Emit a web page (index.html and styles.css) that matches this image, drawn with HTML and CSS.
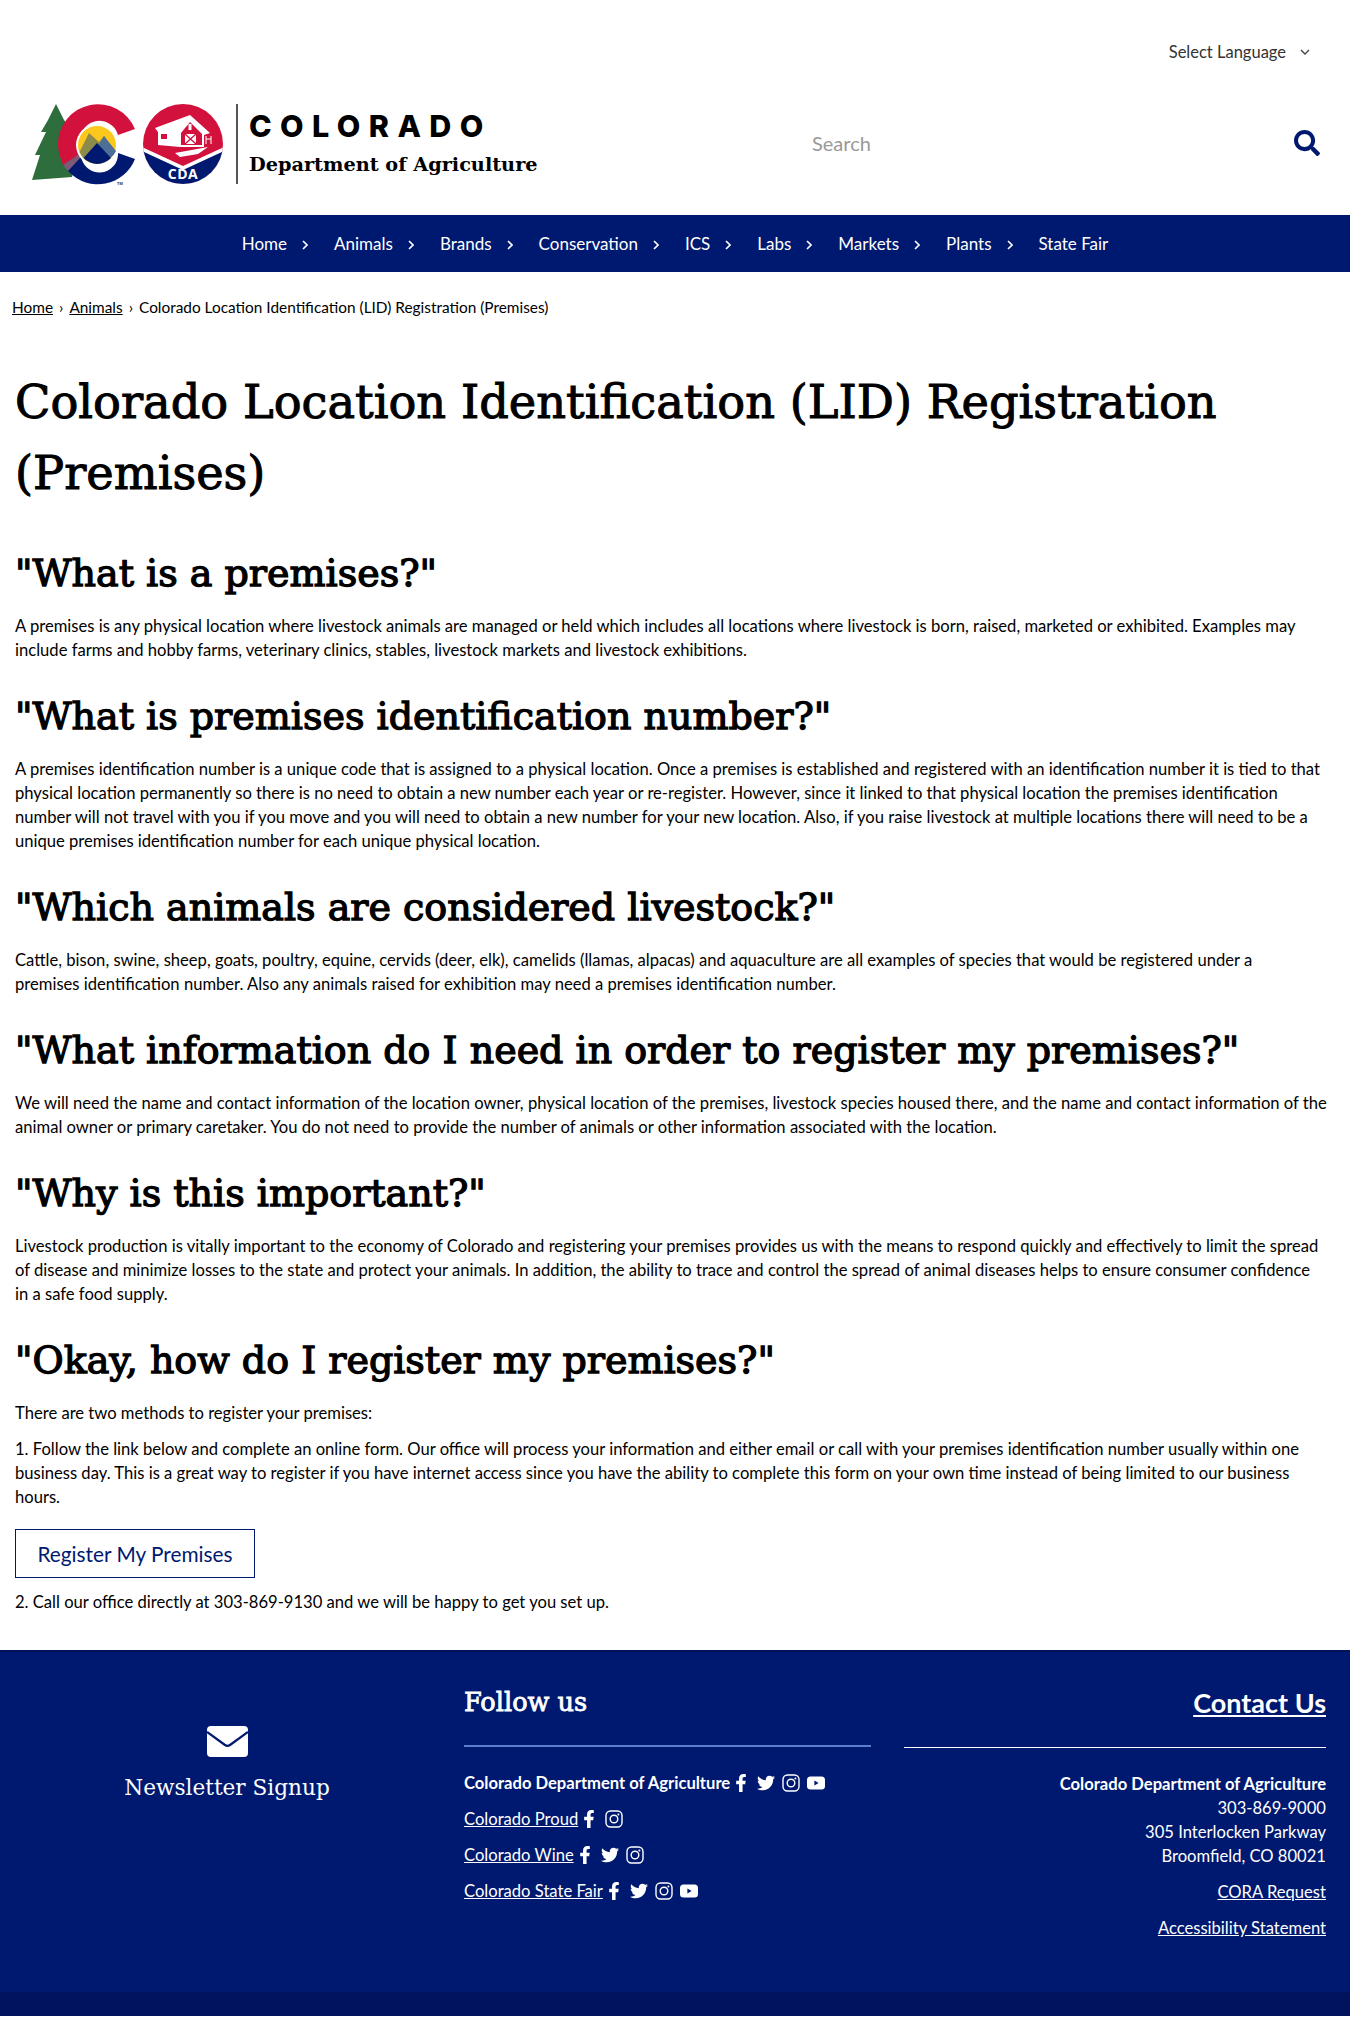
FILE: index.html
```html
<!DOCTYPE html>
<html lang="en">
<head>
    <meta charset="UTF-8">
    <title>Colorado Location Identification (LID) Registration (Premises)</title>
    <link rel="stylesheet" href="styles.css">
</head>
<body>
    <svg class="sprites" width="0" height="0" aria-hidden="true">
        <symbol id="i-fb" viewBox="0 0 320 512"><path d="M279.14 288l14.22-92.66h-88.91v-60.13c0-25.35 12.42-50.06 52.24-50.06h40.42V6.26S260.43 0 225.36 0c-73.22 0-121.08 44.38-121.08 124.72v70.62H22.89V288h81.39v224h100.17V288z"/></symbol>
        <symbol id="i-tw" viewBox="0 0 512 512"><path d="M459.37 151.716c.325 4.548.325 9.097.325 13.645 0 138.72-105.583 298.558-298.558 298.558-59.452 0-114.68-17.219-161.137-47.106 8.447.974 16.568 1.299 25.34 1.299 49.055 0 94.213-16.568 130.274-44.832-46.132-.975-84.792-31.188-98.112-72.772 6.498.974 12.995 1.624 19.818 1.624 9.421 0 18.843-1.3 27.614-3.573-48.081-9.747-84.143-51.98-84.143-102.985v-1.299c13.969 7.797 30.214 12.67 47.431 13.319-28.264-18.843-46.781-51.005-46.781-87.391 0-19.492 5.197-37.36 14.294-52.954 51.655 63.675 129.3 105.258 216.365 109.807-1.624-7.797-2.599-15.918-2.599-24.04 0-57.828 46.782-104.934 104.934-104.934 30.213 0 57.502 12.67 76.67 33.137 23.715-4.548 46.456-13.32 66.599-25.34-7.798 24.366-24.366 44.833-46.132 57.827 21.117-2.273 41.584-8.122 60.426-16.243-14.292 20.791-32.161 39.308-52.628 54.253z"/></symbol>
        <symbol id="i-ig" viewBox="0 0 18 18"><rect x="1" y="1" width="16" height="16" rx="4.5" fill="none" stroke="#fff" stroke-width="1.4"/><circle cx="9" cy="9" r="3.8" fill="none" stroke="#fff" stroke-width="1.4"/><circle cx="13.4" cy="4.6" r="1" fill="#fff"/></symbol>
        <symbol id="i-yt" viewBox="0 0 18 18"><rect x="0" y="2.5" width="18" height="13" rx="3.5" fill="#fff"/><path d="M7.4 6.6L11.6 9l-4.2 2.4z" fill="#001970"/></symbol>
        <symbol id="i-chev" viewBox="0 0 6 10"><path d="M1 1l4 4-4 4" fill="none" stroke="#fff" stroke-width="1.6"/></symbol>
    </svg>

    <header class="site-header">
        <div class="lang-row">
            <span class="lang">Select Language</span>
            <svg class="lang-chev" width="10" height="6" viewBox="0 0 10 6"><path d="M1 1l4 4 4-4" fill="none" stroke="#444" stroke-width="1.4"/></svg>
        </div>
        <div class="brand-row">
            <div class="brand">
                <svg class="logo" width="218" height="82" viewBox="11 13 218 82">
                    <!-- tree -->
                    <path d="M36 14L28 30 21 42 26 42 15 65 20 65 12 90 52 87 60 50 44 30z" fill="#2e6d3c"/>
                    <!-- C -->
                    <path d="M115 39A40 40 0 0 0 38 54c0 7 2 13 5 21l17-11 1-9a17 17 0 0 1 37-10z" fill="#d2123c"/>
                    <path d="M115 69A40 40 0 0 1 49 82 40 40 0 0 1 47 80l14-15a17 17 0 0 0 37-2z" fill="#001970"/>
                    <path d="M43 75l18-12 1 3-14 15a40 40 0 0 1-5-6z" fill="#7c5a78"/>
                    <circle cx="77" cy="55" r="21" fill="#fff"/>
                    <circle cx="77" cy="55" r="19" fill="#fdc81e"/>
                    <path d="M59.500 62a19 19 0 0 0 35 0L84 46l-5 6-10-9z" fill="#8c8b4c"/>
                    <path d="M70 70l14-24 12 15a19 19 0 0 1-2.500 4L88 70z" fill="#4c6f97"/>
                    <path d="M63.500 68L77 53l14 15a19 19 0 0 1-27.500 0z" fill="#001970"/>
                    <text x="97" y="95" class="tm">TM</text>
                    <!-- CDA badge -->
                    <clipPath id="badge"><circle cx="163" cy="54" r="40"/></clipPath>
                    <g clip-path="url(#badge)">
                        <rect x="120" y="10" width="90" height="90" fill="#d2123c"/>
                        <path d="M120 56l43 20 43-20v40h-86z" fill="#fff"/>
                        <path d="M120 60l43 20 43-20v40h-86z" fill="#001970"/>
                    </g>
                    <path d="M135 38l35-13 20 18-6 2v12h-24l-22-2v-13z" fill="#fff"/>
                    <path d="M161 43l9-11 12 12v11h-21z" fill="#d2123c"/>
                    <rect x="165" y="44" width="11" height="10" fill="#fff"/>
                    <path d="M165 44l11 10m0-10l-11 10" stroke="#d2123c" stroke-width="1.300"/>
                    <rect x="141" y="44" width="6" height="5" fill="#d2123c"/>
                    <rect x="168.500" y="34" width="3" height="6" fill="#fff"/>
                    <path d="M186 46v8M191 46v8M186 49h5" stroke="#fff" stroke-width="1" fill="none"/>
                    <path d="M155 63l33-6-10 7-18 3z" fill="#fff"/>
                    <text x="163" y="89" class="cda" text-anchor="middle">CDA</text>
                    <rect x="216" y="14" width="2" height="80" fill="#555"/>
                </svg>
                <div class="brand-text">
                    <div class="brand-state">COLORADO</div>
                    <div class="brand-dept">Department of Agriculture</div>
                </div>
            </div>
            <div class="search">
                <span class="search-text">Search</span>
                <svg class="search-icon" width="26" height="26" viewBox="0 0 512 512"><path d="M505 442.7L405.3 343c-4.5-4.5-10.6-7-17-7H372c27.6-35.3 44-79.7 44-128C416 93.1 322.9 0 208 0S0 93.1 0 208s93.1 208 208 208c48.3 0 92.7-16.4 128-44v16.3c0 6.4 2.5 12.500 7 17l99.7 99.7c9.4 9.4 24.6 9.4 33.9 0l28.3-28.3c9.4-9.4 9.4-24.6.1-34zM208 336c-70.7 0-128-57.2-128-128 0-70.7 57.2-128 128-128 70.7 0 128 57.2 128 128 0 70.7-57.2 128-128 128z"/></svg>
            </div>
        </div>
    </header>

    <nav class="main-nav">
        <a href="#">Home<svg><use href="#i-chev"/></svg></a>
        <a href="#">Animals<svg><use href="#i-chev"/></svg></a>
        <a href="#">Brands<svg><use href="#i-chev"/></svg></a>
        <a href="#">Conservation<svg><use href="#i-chev"/></svg></a>
        <a href="#">ICS<svg><use href="#i-chev"/></svg></a>
        <a href="#">Labs<svg><use href="#i-chev"/></svg></a>
        <a href="#">Markets<svg><use href="#i-chev"/></svg></a>
        <a href="#">Plants<svg><use href="#i-chev"/></svg></a>
        <a href="#">State Fair</a>
    </nav>

    <div class="breadcrumb">
        <a href="#">Home</a><span class="sep">›</span><a href="#">Animals</a><span class="sep">›</span><span>Colorado Location Identification (LID) Registration (Premises)</span>
    </div>

    <main class="content">
        <h1>Colorado Location Identification (LID) Registration (Premises)</h1>

        <h2>"What is a premises?"</h2>
        <p>A premises is any physical location where livestock animals are managed or held which includes all locations where livestock is born, raised, marketed or exhibited. Examples may include farms and hobby farms, veterinary clinics, stables, livestock markets and livestock exhibitions.</p>

        <h2>"What is premises identification number?"</h2>
        <p>A premises identification number is a unique code that is assigned to a physical location. Once a premises is established and registered with an identification number it is tied to that physical location permanently so there is no need to obtain a new number each year or re-register. However, since it linked to that physical location the premises identification number will not travel with you if you move and you will need to obtain a new number for your new location. Also, if you raise livestock at multiple locations there will need to be a unique premises identification number for each unique physical location.</p>

        <h2>"Which animals are considered livestock?"</h2>
        <p>Cattle, bison, swine, sheep, goats, poultry, equine, cervids (deer, elk), camelids (llamas, alpacas) and aquaculture are all examples of species that would be registered under a<br>premises identification number. Also any animals raised for exhibition may need a premises identification number.</p>

        <h2>"What information do I need in order to register my premises?"</h2>
        <p>We will need the name and contact information of the location owner, physical location of the premises, livestock species housed there, and the name and contact information of the animal owner or primary caretaker. You do not need to provide the number of animals or other information associated with the location.</p>

        <h2>"Why is this important?"</h2>
        <p>Livestock production is vitally important to the economy of Colorado and registering your premises provides us with the means to respond quickly and effectively to limit the spread of disease and minimize losses to the state and protect your animals. In addition, the ability to trace and control the spread of animal diseases helps to ensure consumer confidence<br>in a safe food supply.</p>

        <h2>"Okay, how do I register my premises?"</h2>
        <p>There are two methods to register your premises:</p>
        <p>1. Follow the link below and complete an online form. Our office will process your information and either email or call with your premises identification number usually within one business day. This is a great way to register if you have internet access since you have the ability to complete this form on your own time instead of being limited to our business hours.</p>
        <a class="btn" href="#">Register My Premises</a>
        <p>2. Call our office directly at 303-869-9130 and we will be happy to get you set up.</p>
    </main>

    <footer class="site-footer">
        <div class="footer-cols">
            <div class="newsletter">
                <svg class="envelope" width="41" height="31" viewBox="0 0 41 31"><rect width="41" height="31" rx="4" fill="#fff"/><path d="M0 6l18 13q2.500 1.800 5 0L41 6" fill="none" stroke="#001970" stroke-width="2.200"/></svg>
                <div class="newsletter-label">Newsletter Signup</div>
            </div>
            <div class="follow">
                <h3>Follow us</h3>
                <div class="social-row">
                    <span>Colorado Department of Agriculture</span>
                    <svg class="ic"><use href="#i-fb"/></svg><svg class="ic"><use href="#i-tw"/></svg><svg class="ic"><use href="#i-ig"/></svg><svg class="ic"><use href="#i-yt"/></svg>
                </div>
                <div class="social-row">
                    <a href="#">Colorado Proud</a>
                    <svg class="ic"><use href="#i-fb"/></svg><svg class="ic"><use href="#i-ig"/></svg>
                </div>
                <div class="social-row">
                    <a href="#">Colorado Wine</a>
                    <svg class="ic"><use href="#i-fb"/></svg><svg class="ic"><use href="#i-tw"/></svg><svg class="ic"><use href="#i-ig"/></svg>
                </div>
                <div class="social-row">
                    <a href="#">Colorado State Fair</a>
                    <svg class="ic"><use href="#i-fb"/></svg><svg class="ic"><use href="#i-tw"/></svg><svg class="ic"><use href="#i-ig"/></svg><svg class="ic"><use href="#i-yt"/></svg>
                </div>
            </div>
            <div class="contact">
                <a class="contact-title" href="#">Contact Us</a>
                <div class="contact-info">
                    <strong>Colorado Department of Agriculture</strong><br>
                    303-869-9000<br>
                    305 Interlocken Parkway<br>
                    Broomfield, CO 80021
                </div>
                <a class="contact-link" href="#">CORA Request</a>
                <a class="contact-link" href="#">Accessibility Statement</a>
            </div>
        </div>
        <div class="footer-band"></div>
    </footer>
</body>
</html>
```

FILE: styles.css
```css
body { margin: 0; font-family: Lato, "Open Sans", sans-serif; font-size: 16.6px; line-height: 24px; color: #000; background: #fff; }
a { color: inherit; }
.sprites { position: absolute; }

/* header */
.site-header { height: 215px; }
.lang-row { display: flex; justify-content: flex-end; align-items: center; padding: 40px 40px 0 0; height: 24px; font-size: 16.5px; color: #333; }
.lang-chev { margin-left: 14px; }
.brand-row { display: flex; align-items: center; justify-content: space-between; margin-top: 39px; height: 82px; padding: 0 30px 0 31px; }
.brand { display: flex; align-items: center; }
.logo { display: block; }
.tm { font-size: 4px; font-family: "Liberation Sans", sans-serif; font-weight: bold; fill: #333; }
.cda { font-size: 14px; font-weight: bold; font-family: "Open Sans", sans-serif; fill: #fff; letter-spacing: 0.5px; }
.brand-text { display: flex; flex-direction: column; }
.brand-state { font-family: Inter, sans-serif; font-weight: 800; font-size: 30.500px; line-height: 36px; letter-spacing: 8.4px; margin-top: -2px; }
.brand-dept { font-family: "DejaVu Serif", serif; font-weight: 700; font-size: 19.3px; line-height: 28px; margin-top: 7px; }
.search { display: flex; align-items: center; justify-content: space-between; width: 508px; margin-top: -2px; }
.search-text { font-size: 20px; color: #999; }
.search-icon { fill: #001970; display: block; }

/* nav */
.main-nav { display: flex; justify-content: center; background: #001970; height: 57px; align-items: center; color: #fff; }
.main-nav a { display: flex; align-items: center; text-decoration: none; font-size: 17px; }
.main-nav svg { width: 6px; height: 10px; margin: 2px 26px 0 15px; }

.breadcrumb { font-size: 15.4px; padding: 23px 12px 0; height: 72px; line-height: 24px; }
.breadcrumb .sep { margin: 0 6px; }

/* content */
.content { padding: 0 15px; }
h1 { font-family: "DejaVu Serif", serif; font-weight: 400; font-size: 46.3px; line-height: 71px; margin: 0 0 40px; -webkit-text-stroke: 1px #000; }
h2 { font-family: "DejaVu Serif", serif; font-weight: 400; font-size: 38px; line-height: 48px; margin: 30px 0 17px; -webkit-text-stroke: 1.3px #000; }
p { margin: 0 0 12px; }
.btn { display: block; width: 240px; box-sizing: border-box; height: 49px; line-height: 47px; border: 1px solid #001970; color: #001970; text-align: center; text-decoration: none; font-size: 20.8px; margin: 20px 0 12px; }

/* footer */
.site-footer { background: #001970; color: #fff; margin-top: 36px; }
.footer-cols { display: grid; grid-template-columns: 464px 440px 422px; padding: 0 24px 0 0; height: 342px; box-sizing: border-box; border-top: 2px solid #00125e; }
.footer-band { height: 24px; background: #00135c; }
.newsletter { text-align: center; padding: 74px 10px 0 0; }
.envelope { display: block; margin: 0 auto; }
.newsletter-label { font-family: "DejaVu Serif", serif; font-size: 21.6px; line-height: 30px; margin-top: 16px; }
.follow { padding-right: 33px; }
.follow h3 { font-family: "DejaVu Serif", serif; font-weight: 400; font-size: 25.6px; line-height: 32px; margin: 34px 0 0; padding-bottom: 27px; border-bottom: 2px solid #5b7fcf; height: 32px; -webkit-text-stroke: 0.8px #fff; }
.social-row { display: flex; align-items: center; height: 36px; }
.social-row:nth-of-type(1) { margin-top: 18px; font-weight: 700; }
.ic { width: 18px; height: 18px; margin-left: 7px; fill: #fff; }
.social-row a + .ic, .social-row span + .ic { margin-left: 2px; }
.contact { text-align: right; }
.contact-title { display: block; font-size: 27px; font-weight: 700; line-height: 36px; margin-top: 33px; padding-bottom: 26px; border-bottom: 1px solid #fff; height: 36px; }
.contact-info { margin-top: 24px; }
.contact-link { display: block; margin-top: 12px; }
```
